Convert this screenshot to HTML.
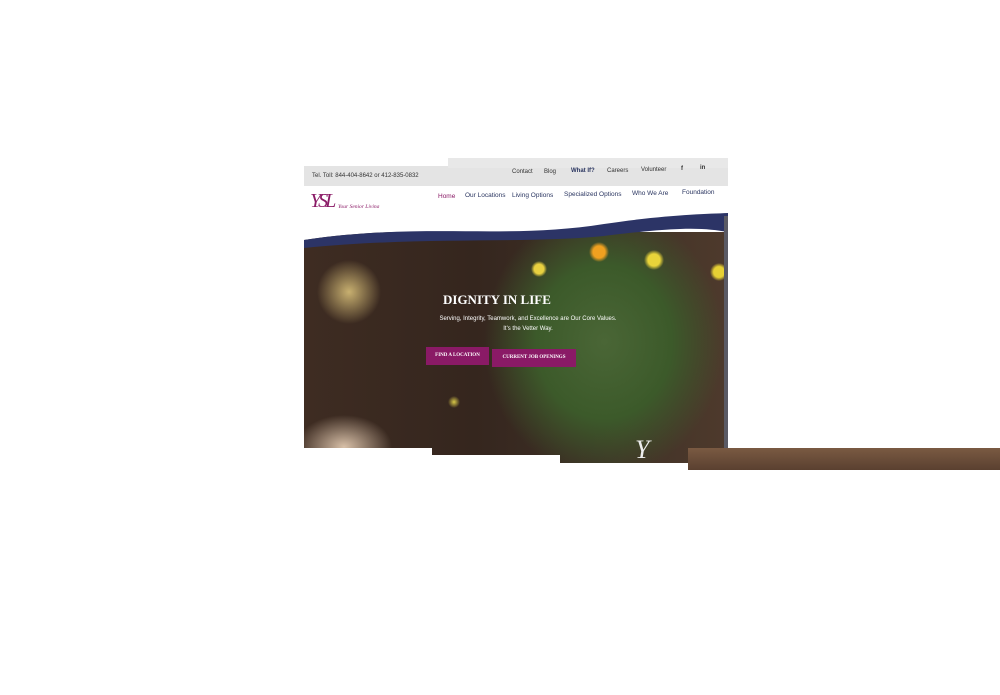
<!DOCTYPE html>
<html><head><meta charset="utf-8"><style>
body{margin:0;width:1000px;height:695px;background:#fff;position:relative;overflow:hidden;font-family:"Liberation Sans",sans-serif}
.a{position:absolute}
.top{left:304px;top:166px;width:424px;height:20px;background:#e4e4e4}
.t{font-size:6px;color:#333;white-space:nowrap}
.nav{font-size:6.5px;color:#2a3560;white-space:nowrap}
.hero{left:304px;top:232px;width:424px;height:232px;overflow:hidden;
background:
radial-gradient(circle 8px at 235px 37px,#e8d040 0,#e8d040 60%,transparent 100%),
radial-gradient(circle 10px at 350px 28px,#e9d43a 0,#e9d43a 60%,transparent 100%),
radial-gradient(circle 10px at 295px 20px,#f0a020 0,#f0a020 60%,transparent 100%),
radial-gradient(circle 9px at 415px 40px,#e6d034 0,#e6d034 60%,transparent 100%),
radial-gradient(circle 6px at 150px 170px,#d8c848 0,transparent 100%),
radial-gradient(ellipse 150px 170px at 300px 110px,#4a6636 0,#3c5a2a 45%,transparent 80%),
radial-gradient(ellipse 40px 40px at 45px 60px,#c8b070 0,transparent 80%),
radial-gradient(ellipse 60px 40px at 40px 215px,#d8c0a8 0,transparent 80%),
linear-gradient(90deg,#3e2c22 0,#35261e 40%,#3e3026 70%,#4e3a2c 100%)}
.btn{background:#8a1a66;color:#fff;font-family:"Liberation Serif",serif;font-size:5px;font-weight:bold;text-align:center;line-height:18px}
</style></head><body>
<div class="a top"></div>
<div class="a" style="left:448px;top:158px;width:280px;height:10px;background:#e8e8e8"></div>
<div class="a t" style="left:312px;top:173px">Tel. Toll: 844-404-8642 or 412-835-0832</div>
<div class="a t" style="left:512px;top:169px">Contact</div>
<div class="a t" style="left:544px;top:169px">Blog</div>
<div class="a t" style="left:571px;top:168px;color:#2a3560;font-weight:bold">What If?</div>
<div class="a t" style="left:607px;top:168px">Careers</div>
<div class="a t" style="left:641px;top:167px">Volunteer</div>
<div class="a t" style="left:681px;top:166px;font-weight:bold">f</div>
<div class="a t" style="left:700px;top:165px;font-weight:bold">in</div>
<div class="a" style="left:310px;top:190px;font-family:'Liberation Serif',serif;font-style:italic;font-size:20px;color:#8a1a66;letter-spacing:-3px">YSL</div>
<div class="a" style="left:338px;top:204px;font-family:'Liberation Serif',serif;font-style:italic;font-size:5.5px;color:#8a1a66">Your Senior Living</div>
<div class="a nav" style="left:438px;top:193px;color:#8a1a66">Home</div>
<div class="a nav" style="left:465px;top:192px">Our Locations</div>
<div class="a nav" style="left:512px;top:192px">Living Options</div>
<div class="a nav" style="left:564px;top:191px">Specialized Options</div>
<div class="a nav" style="left:632px;top:190px">Who We Are</div>
<div class="a nav" style="left:682px;top:189px">Foundation</div>
<div class="a hero"></div>
<svg class="a" style="left:304px;top:208px" width="424" height="40"><path d="M0 32 C120 14 200 32 300 16 C360 7 400 6 424 5 L424 0 L0 0Z" fill="#fff"/><path d="M0 32 C120 14 200 32 300 16 C360 7 400 6 424 5 L424 24 C400 20 380 18 300 28 C220 36 120 28 0 40Z" fill="#2c3466"/></svg>
<div class="a" style="left:724px;top:216px;width:4px;height:250px;background:#5a5a64"></div>
<div class="a" style="left:443px;top:292px;font-family:'Liberation Serif',serif;font-weight:bold;font-size:13px;color:#fff">DIGNITY IN LIFE</div>
<div class="a" style="left:398px;top:314px;font-size:6px;color:#fff;width:260px;text-align:center;line-height:10px">Serving, Integrity, Teamwork, and Excellence are Our Core Values.<br>It's the Vetter Way.</div>
<div class="a btn" style="left:426px;top:347px;width:63px">FIND A LOCATION</div>
<div class="a btn" style="left:492px;top:349px;width:84px">CURRENT JOB OPENINGS</div>
<div class="a" style="left:304px;top:448px;width:128px;height:30px;background:#fff"></div>
<div class="a" style="left:432px;top:455px;width:128px;height:30px;background:#fff"></div>
<div class="a" style="left:560px;top:463px;width:128px;height:20px;background:#fff"></div>
<div class="a" style="left:688px;top:448px;width:312px;height:22px;background:linear-gradient(#7a5a42,#5a4030)"></div>
<div class="a" style="left:635px;top:435px;font-family:'Liberation Serif',serif;font-style:italic;font-size:26px;color:#eee">Y</div>
</body></html>
